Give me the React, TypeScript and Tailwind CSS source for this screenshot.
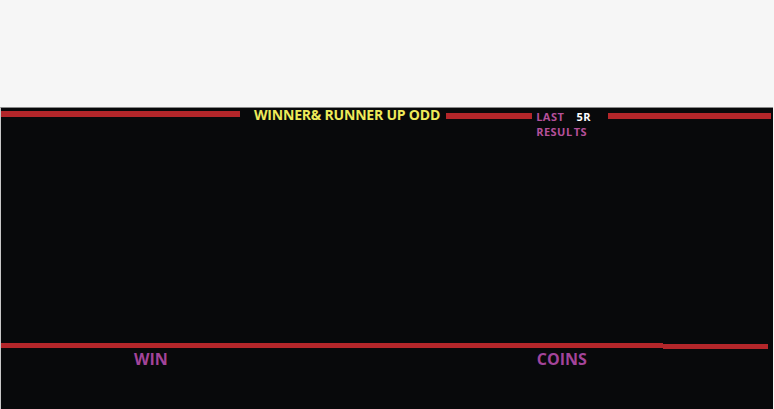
export default function App() {
  return (
    <div
      className="w-[774px] h-[409px] bg-[#f6f6f6] flex flex-col overflow-hidden"
      style={{ fontFamily: '"Open Sans", "Liberation Sans", sans-serif' }}
    >
      <div className="h-[107px] shrink-0" />
      {/* Panel */}
      <div className="w-[773px] flex-1 bg-[#08090b] border-t border-l border-t-[#8a8a8a] border-l-[#c8c8c8] flex flex-col">
        {/* Header row */}
        <div className="flex items-start">
          <div className="mt-[3px] h-[6px] w-[239px] bg-[#b3262a]" />
          <div className="ml-[14px] text-[14px] leading-none font-bold text-[#eeea5a] whitespace-nowrap tracking-[-0.2px]">
            WINNER&amp; RUNNER UP ODD
          </div>
          <div className="ml-[6px] mt-[5px] h-[6px] w-[86px] bg-[#b3262a]" />
          <div className="ml-[4px] mt-[1px] w-[72px] text-[11px] leading-[15px] tracking-[0.5px] font-bold text-[#b5509a] whitespace-nowrap">
            <div className="flex">
              <span>LAST</span>
              <span className="ml-[12px] text-white">5R</span>
            </div>
            <div>
              RESUL<span className="ml-[1px]">TS</span>
            </div>
          </div>
          <div className="mt-[5px] h-[6px] w-[163px] bg-[#b3262a]" />
        </div>

        <div className="flex-1" />

        {/* Bottom section */}
        <div className="h-[66px] flex flex-col">
          <div className="flex items-start">
            <div className="h-[5px] w-[662px] bg-[#b3262a]" />
            <div className="mt-[1px] h-[5px] w-[105px] bg-[#b3262a]" />
          </div>
          <div className="flex text-[16px] leading-[20px] font-bold text-[#a3449a]">
            <span className="ml-[133px]">WIN</span>
            <span className="ml-[369px]">COINS</span>
          </div>
        </div>
      </div>
    </div>
  );
}
